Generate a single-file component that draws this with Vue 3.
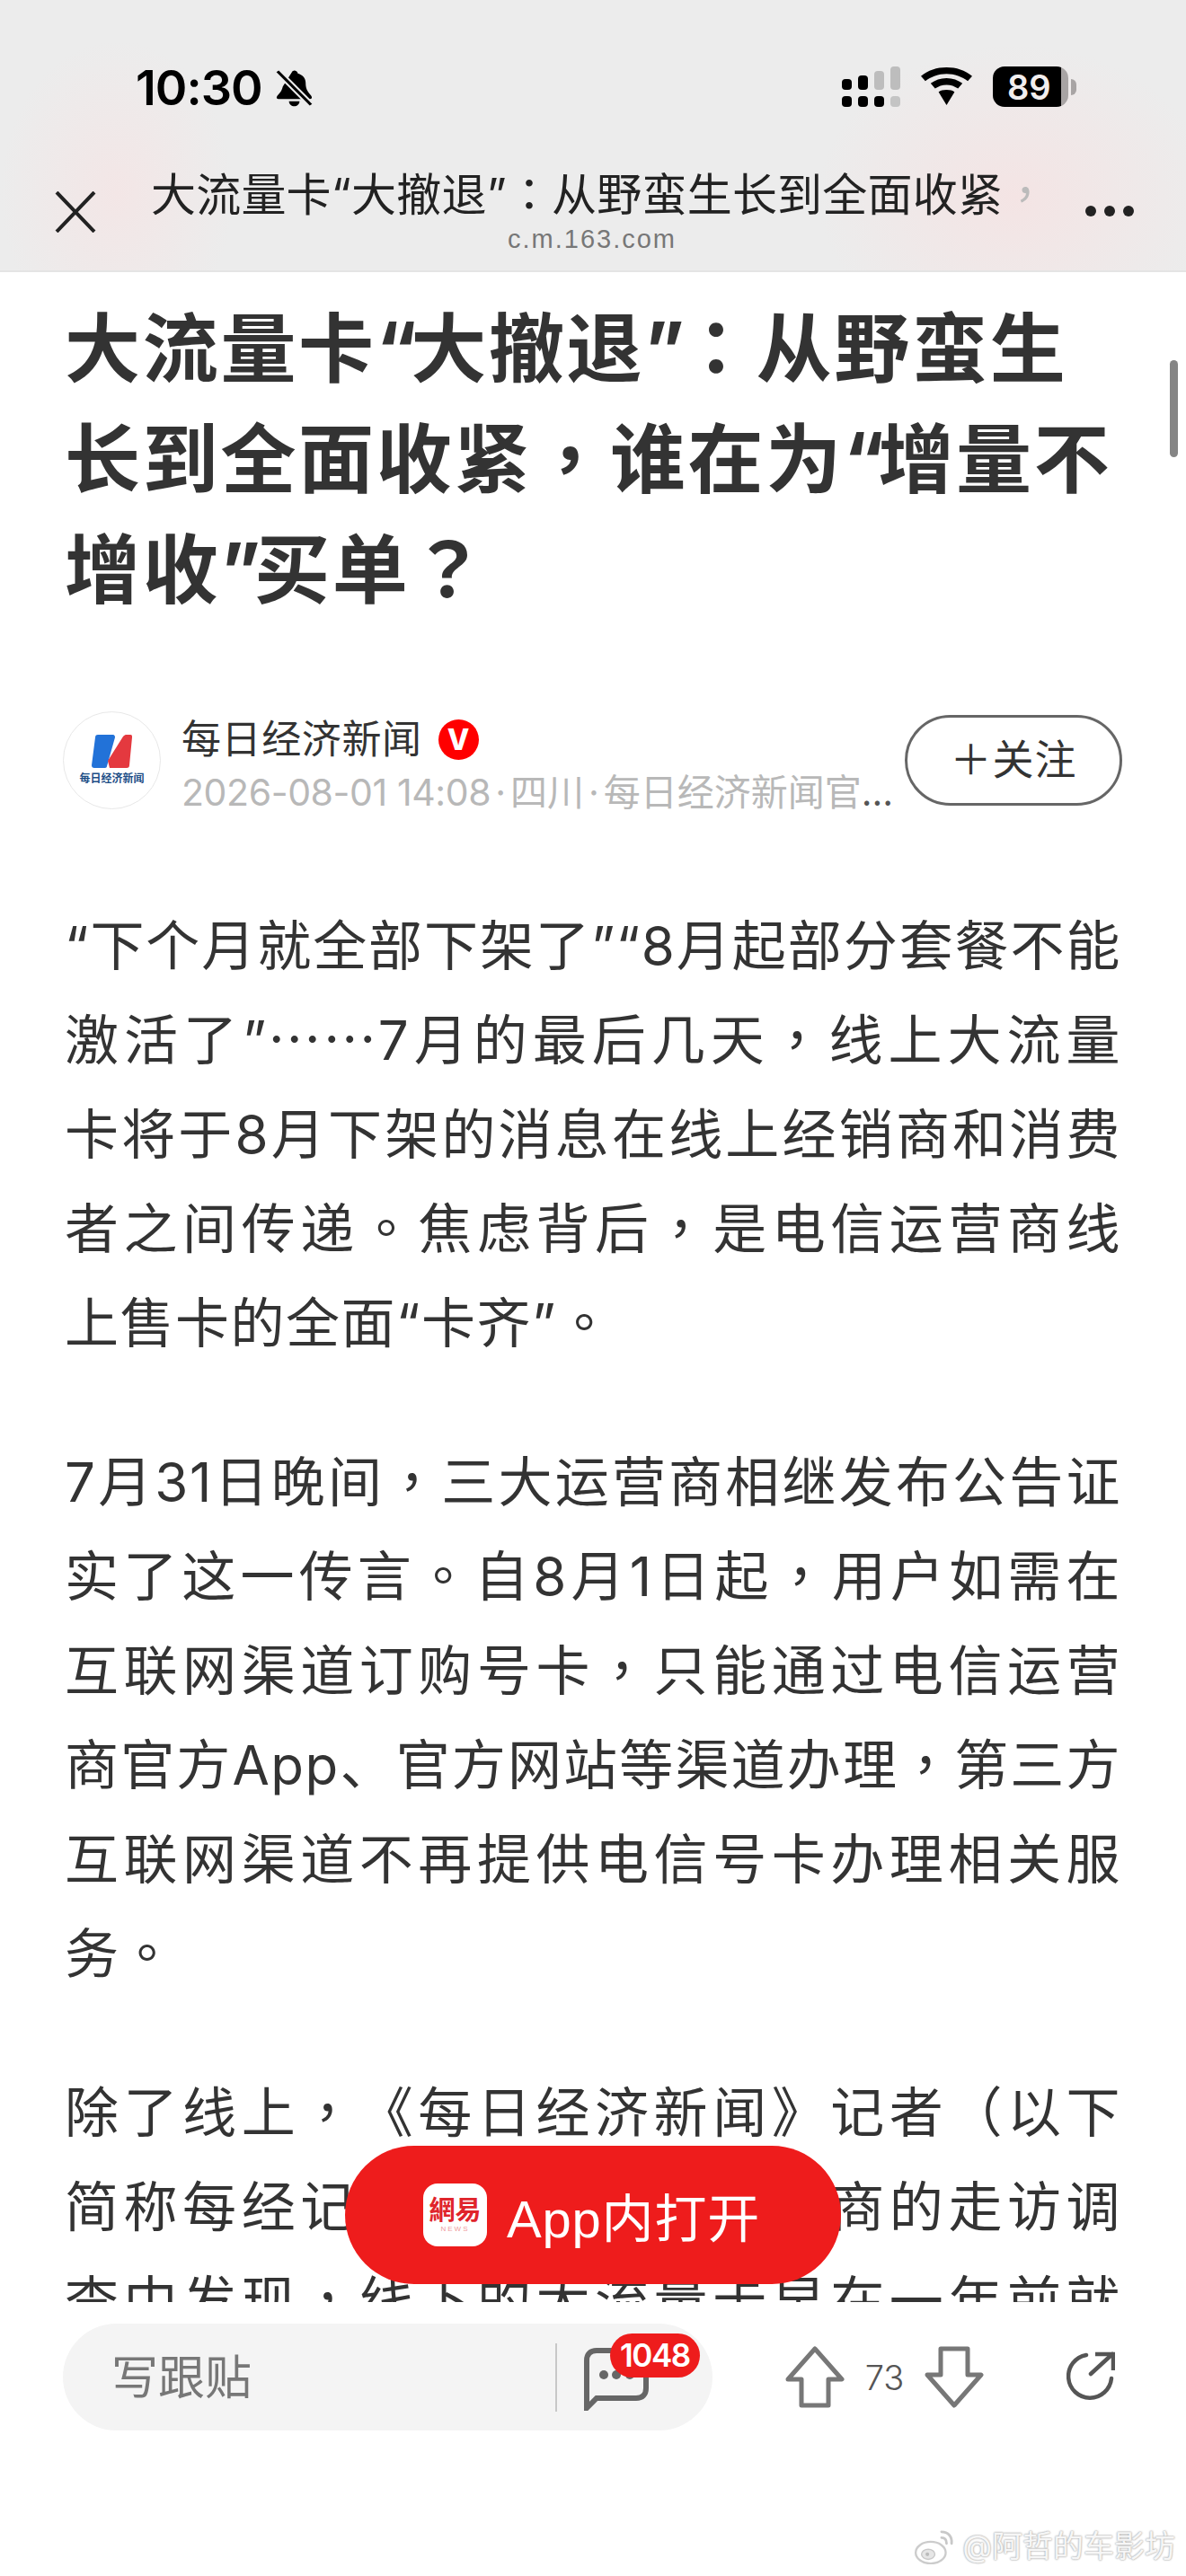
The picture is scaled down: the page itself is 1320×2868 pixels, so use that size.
<template>
  <div class="page">
    <header class="top">
      <div class="status">
        <div class="status-left">
          <span class="time">10:30</span>
          <svg class="bell" viewBox="0 0 44 54" width="43" height="44" preserveAspectRatio="none">
            <path d="M22 3c2 0 4 2 4 4 6 2 9 7 9 13 0 6 1 11 6 17 2 3 1 5-2 5H5c-3 0-4-2-2-5 4-4 5-8 6-12L20 4z" fill="#000"/>
            <path d="M16 45h12c0 4-3 7-6 7s-6-3-6-7z" fill="#000"/>
            <path d="M3 4l38 46" stroke="#ececec" stroke-width="8"/>
            <path d="M3 4l38 46" stroke="#000" stroke-width="3.4"/>
          </svg>
        </div>
        <div class="status-right">
          <svg viewBox="0 0 65 45" width="65" height="45">
            <rect x="0" y="14" width="11" height="12" rx="4" fill="#000"/>
            <rect x="18" y="10" width="11" height="16" rx="4" fill="#000"/>
            <rect x="36" y="5" width="11" height="21" rx="4" fill="#bdbdbd"/>
            <rect x="54" y="0" width="11" height="26" rx="4" fill="#bdbdbd"/>
            <rect x="0" y="33" width="11" height="12" rx="4" fill="#000"/>
            <rect x="18" y="33" width="11" height="12" rx="4" fill="#000"/>
            <rect x="36" y="33" width="11" height="12" rx="4" fill="#000"/>
            <rect x="54" y="33" width="11" height="12" rx="4" fill="#c4c4c4"/>
          </svg>
          <svg class="wifi" viewBox="0 0 58 52" width="57" height="42" preserveAspectRatio="none">
            <path d="M29 0c11 0 21 4 29 12l-5 7C47 13 38 9 29 9S11 13 5 19l-5-7C8 4 18 0 29 0z" fill="#000"/>
            <path d="M29 15c7 0 13 3 18 7l-5 7c-4-3-8-5-13-5s-9 2-13 5l-5-7c5-4 11-7 18-7z" fill="#000"/>
            <path d="M29 31c4 0 7 1 9 3L29 52 20 34c2-2 5-3 9-3z" fill="#000"/>
          </svg>
          <div class="battery">
            <div class="battery-body"><span>89</span></div>
            <div class="battery-nub"></div>
          </div>
        </div>
      </div>
      <div class="nav">
        <svg class="close" viewBox="0 0 46 46" width="46" height="46">
          <path d="M2 1l42 44M44 1L2 45" stroke="#222" stroke-width="4" fill="none"/>
        </svg>
        <div class="nav-text">
          <div class="nav-title">
            <span v-for="(part, i) in parts('大流量卡“大撤退”：从野蛮生长到全面收紧')" :key="i" :class="part.kind">{{ part.text }}</span><span class="punct fade">，</span>
          </div>
          <div class="nav-url">c.m.163.com</div>
        </div>
        <div class="more"><i></i><i></i><i></i></div>
      </div>
    </header>

    <main class="article">
      <h1><span v-for="(part, i) in parts(title)" :key="i" :class="part.kind">{{ part.text }}</span></h1>
      <div class="author">
        <div class="avatar">
          <svg viewBox="0 0 45 37" width="45" height="37">
            <path d="M7 0h16c3 0 3 2 3 3L17 35c0 1-1 2-2 2H3c-2 0-3-1-3-3L4 3c0-2 1-3 3-3z" fill="#2272d8"/>
            <path d="M38 0h5c2 0 2 1 2 3l-3 31c0 2-1 3-3 3H20l-2-8L35 2c1-1 2-2 3-2z" fill="#e4393f"/>
          </svg>
          <span>每日经济新闻</span>
        </div>
        <div class="author-info">
          <div class="author-name">每日经济新闻<b class="vip">V</b></div>
          <div class="author-meta">
            <span class="stamp">2026-08-01 14:08</span><span class="sep">·</span>四川<span class="sep">·</span>每日经济新闻官<span class="dots">...</span>
          </div>
        </div>
        <div class="follow">＋关注</div>
      </div>
      <div class="body">
        <p v-for="(para, i) in paragraphs" :key="i">
          <span
            v-for="(line, j) in para"
            :key="j"
            class="line"
            :class="{ last: line.length < 12 }"
          ><span v-for="(part, k) in parts(line)" :key="k" :class="part.kind">{{ part.text }}</span></span>
        </p>
      </div>
    </main>

    <div class="open-app">
      <div class="app-logo">
        <span class="logo-cn">網易</span>
        <span class="logo-en">NEWS</span>
      </div>
      <span class="open-text">App内打开</span>
    </div>

    <footer class="bottom">
      <div class="reply">
        <span class="reply-hint">写跟贴</span>
        <div class="reply-comments">
          <svg viewBox="0 0 72 70" width="72" height="70">
            <path d="M3 67V14C3 7 7 3 14 3h44c7 0 11 4 11 11v31c0 7-4 11-11 11H14z" fill="none" stroke="#666" stroke-width="6"/>
            <circle cx="22" cy="30" r="5" fill="#666"/>
            <circle cx="36" cy="30" r="5" fill="#666"/>
            <circle cx="51" cy="30" r="5" fill="#666"/>
          </svg>
          <span class="count">1048</span>
        </div>
      </div>
      <div class="votes">
        <svg viewBox="0 0 66 69" width="66" height="69">
          <path d="M33 3L63 37H48V66H18V37H3z" fill="none" stroke="#777" stroke-width="5" stroke-linejoin="round"/>
        </svg>
        <span class="vote-num">73</span>
        <svg viewBox="0 0 66 69" width="66" height="69">
          <path d="M33 66L63 32H48V3H18V32H3z" fill="none" stroke="#777" stroke-width="5" stroke-linejoin="round"/>
        </svg>
      </div>
      <svg class="share" viewBox="0 0 54 54" width="54" height="54">
        <path d="M22 4A24 24 0 1 0 50 30" fill="none" stroke="#555" stroke-width="4.5" stroke-linecap="round"/>
        <path d="M27 25L51 3" fill="none" stroke="#555" stroke-width="4.5" stroke-linecap="round"/>
        <path d="M32 3h20v18" fill="none" stroke="#555" stroke-width="4.5"/>
      </svg>
    </footer>

    <div class="watermark">
      <svg viewBox="0 0 50 42" width="47" height="39">
        <ellipse cx="20" cy="28" rx="18" ry="13" fill="#fff" stroke="#ccc" stroke-width="2.5"/>
        <ellipse cx="17" cy="30" rx="8" ry="6" fill="#e6e6e6" stroke="#c8c8c8" stroke-width="1.5"/>
        <circle cx="16" cy="30" r="2.2" fill="#bbb"/>
        <path d="M33 3c8 0 13 6 12 14M33 10c4 0 6 3 6 7" fill="none" stroke="#c8c8c8" stroke-width="3" stroke-linecap="round"/>
      </svg>
      <span>@阿哲的车影坊</span>
    </div>

    <div class="scrollbar"></div>
  </div>
</template>

<script setup>
const title = "大流量卡“大撤退”：从野蛮生长到全面收紧，谁在为“增量不增收”买单？";

const paragraphs = [
  [
    "“下个月就全部下架了”“8月起部分套餐不能",
    "激活了”……7月的最后几天，线上大流量",
    "卡将于8月下架的消息在线上经销商和消费",
    "者之间传递。焦虑背后，是电信运营商线",
    "上售卡的全面“卡齐”。",
  ],
  [
    "7月31日晚间，三大运营商相继发布公告证",
    "实了这一传言。自8月1日起，用户如需在",
    "互联网渠道订购号卡，只能通过电信运营",
    "商官方App、官方网站等渠道办理，第三方",
    "互联网渠道不再提供电信号卡办理相关服",
    "务。",
  ],
  [
    "除了线上，《每日经济新闻》记者（以下",
    "简称每经记者）在对线下运营商的走访调",
    "查中发现，线下的大流量卡早在一年前就",
  ],
];

// the centred punctuation of the original comes from the TC cut of the font
function parts(text) {
  return text
    .split(/(……|[，。：？“”])/)
    .filter(Boolean)
    .map((t) => {
      let kind = "";
      if (/^[“”]$/.test(t)) kind = "quote";
      else if (/^(……|[，。：？])$/.test(t)) kind = "punct";
      return { text: t, kind };
    });
}
</script>

<style scoped>
.page {
  position: relative;
  width: 1320px;
  height: 2868px;
  overflow: hidden;
  background: #fff;
  display: flex;
  flex-direction: column;
  font-family: "Inter", "Noto Sans CJK SC", sans-serif;
  color: #333;
}
.punct {
  font-family: "Noto Sans CJK TC", sans-serif;
  line-height: 0;
}
.top {
  flex: none;
  height: 303px;
  box-sizing: border-box;
  border-bottom: 2px solid #e4e4e4;
  background:
    radial-gradient(ellipse 130px 170px at 130px 215px, #f3e6e6, rgba(243, 230, 230, 0)),
    radial-gradient(ellipse 220px 170px at 1130px 220px, #f4e4e4, rgba(244, 228, 228, 0)),
    #ececec;
}
.status {
  height: 124px;
  box-sizing: border-box;
  padding: 73px 122px 0 151px;
  display: flex;
  justify-content: space-between;
}
.status-left {
  display: flex;
  align-items: flex-start;
  gap: 14px;
}
.time {
  font-size: 54px;
  line-height: 50px;
  font-weight: 600;
  color: #000;
  letter-spacing: -1px;
}
.bell {
  margin-top: 3px;
}
.status-right {
  display: flex;
  align-items: flex-start;
  gap: 23px;
  margin-top: 1px;
}
.wifi {
  margin-top: 1px;
}
.battery {
  display: flex;
  align-items: center;
  height: 45px;
}
.battery-body {
  width: 84px;
  height: 45px;
  border-radius: 13px;
  background: linear-gradient(90deg, #000 90.5%, #a8a4a4 90.5%);
  display: flex;
  align-items: center;
  padding-left: 16px;
  box-sizing: border-box;
}
.battery-body span {
  font-size: 38px;
  font-weight: 600;
  color: #f2eeee;
  line-height: 1;
}
.battery-nub {
  width: 6px;
  height: 18px;
  margin-left: 3px;
  border-radius: 0 9px 9px 0;
  background: #a8a4a4;
}
.nav {
  display: flex;
  align-items: flex-start;
  padding: 65px 58px 0 61px;
}
.close {
  flex: none;
  margin-top: 24px;
}
.nav-text {
  flex: 1;
  min-width: 0;
  margin-left: 61px;
}
.nav-title {
  font-size: 50px;
  line-height: 56px;
  letter-spacing: 0.2px;
  color: #222;
  white-space: nowrap;
}
.fade {
  color: #bbb;
}
.nav-url {
  font-family: "Liberation Sans", sans-serif;
  font-size: 29px;
  line-height: 32px;
  margin-top: 5px;
  margin-left: 397px;
  color: #777;
  letter-spacing: 2px;
}
.more {
  flex: none;
  display: flex;
  gap: 9px;
  margin-top: 40px;
}
.more i {
  width: 12px;
  height: 12px;
  border-radius: 50%;
  background: #222;
}
.article {
  flex: 1;
  min-height: 0;
  overflow: hidden;
  padding: 24px 72px 0;
}
h1 {
  margin: 0;
  font-size: 84px;
  line-height: 123px;
  font-weight: 700;
  color: #333;
  letter-spacing: 2.7px;
}
h1 .quote {
  letter-spacing: -7px;
}
.author {
  display: flex;
  align-items: center;
  margin-top: 95px;
  margin-left: -2px;
  margin-right: -1px;
  height: 110px;
}
.avatar {
  flex: none;
  width: 109px;
  height: 109px;
  box-sizing: border-box;
  border: 1px solid #e8e8e8;
  border-radius: 50%;
  display: flex;
  flex-direction: column;
  align-items: center;
  justify-content: center;
  gap: 5px;
}
.avatar span {
  font-size: 12px;
  line-height: 14px;
  font-weight: 700;
  color: #1d4e86;
  white-space: nowrap;
}
.author-info {
  flex: 1;
  min-width: 0;
  margin-left: 23px;
  padding-top: 8px;
}
.author-name {
  font-size: 44px;
  line-height: 60px;
  letter-spacing: 0.6px;
  color: #333;
  display: flex;
  align-items: center;
}
.vip {
  width: 45px;
  height: 45px;
  margin-left: 18px;
  border-radius: 50%;
  background: #f00;
  color: #fff;
  font-size: 32px;
  line-height: 45px;
  font-weight: 800;
  text-align: center;
  letter-spacing: 0;
}
.author-meta {
  font-size: 41px;
  line-height: 50px;
  margin-top: 4px;
  color: #b8b8b8;
  white-space: nowrap;
}
.stamp {
  letter-spacing: -0.4px;
}
.sep {
  padding: 0 5px;
}
.dots {
  color: #555;
}
.follow {
  flex: none;
  width: 242px;
  height: 101px;
  margin-left: 16px;
  box-sizing: border-box;
  border: 3px solid #666;
  border-radius: 51px;
  font-size: 46px;
  line-height: 93px;
  letter-spacing: 1px;
  text-align: center;
  color: #333;
}
.body {
  margin-top: 100px;
}
p {
  margin: 0 0 72px;
  font-size: 60px;
  line-height: 105px;
  letter-spacing: 1.5px;
  color: #333;
  text-spacing-trim: space-all;
}
.line {
  display: block;
  white-space: nowrap;
  text-align: justify;
  text-align-last: justify;
}
.line.last {
  text-align-last: left;
}
.open-app {
  position: absolute;
  left: 384px;
  top: 2389px;
  width: 552px;
  height: 154px;
  box-sizing: border-box;
  padding-left: 87px;
  border-radius: 77px;
  background: #ee1c1c;
  color: #fff;
  font-family: "Liberation Sans", "Noto Sans CJK SC", sans-serif;
  font-size: 58px;
  display: flex;
  align-items: center;
  gap: 22px;
}
.open-text {
  letter-spacing: 0.8px;
}
.app-logo {
  width: 71px;
  height: 70px;
  border-radius: 16px;
  background: #fff;
  display: flex;
  flex-direction: column;
  align-items: center;
  justify-content: center;
  color: #e0242b;
}
.logo-cn {
  font-size: 29px;
  line-height: 32px;
  font-weight: 700;
  white-space: nowrap;
}
.logo-en {
  font-size: 8px;
  line-height: 10px;
  letter-spacing: 2px;
  color: #ee9a9a;
}
.bottom {
  flex: none;
  height: 305px;
  box-sizing: border-box;
  background: #fff;
  padding: 24px 0 0 70px;
  display: flex;
  align-items: flex-start;
}
.reply {
  flex: none;
  width: 723px;
  height: 119px;
  border-radius: 60px;
  background: #f4f4f4;
  display: flex;
  align-items: center;
  justify-content: space-between;
}
.reply-hint {
  margin-left: 54px;
  margin-top: -6px;
  font-size: 52px;
  color: #777;
}
.reply-comments {
  position: relative;
  width: 175px;
  height: 76px;
  border-left: 2px solid #c8c8c8;
  box-sizing: border-box;
  padding: 5px 0 0 30px;
}
.count {
  position: absolute;
  left: 59px;
  top: -11px;
  height: 49px;
  padding: 0 11px;
  border-radius: 25px;
  background: #ee1c1c;
  color: #fff;
  font-size: 35px;
  font-weight: 600;
  line-height: 49px;
  letter-spacing: -1.5px;
}
.votes {
  display: flex;
  align-items: center;
  margin-left: 81px;
  margin-top: 25px;
}
.vote-num {
  width: 89px;
  text-align: center;
  font-size: 38px;
  color: #555;
  font-weight: 300;
}
.share {
  margin-left: 92px;
  margin-top: 31px;
}
.watermark {
  position: absolute;
  right: 12px;
  top: 2813px;
  display: flex;
  align-items: center;
  gap: 7px;
  font-size: 34px;
  line-height: 44px;
  color: #f6f6f6;
  text-shadow: 0 0 2px #aaa, 0 0 2px #aaa;
}
.scrollbar {
  position: absolute;
  left: 1302px;
  top: 401px;
  width: 9px;
  height: 108px;
  border-radius: 5px;
  background: #858585;
}
</style>

<style>
html,
body {
  margin: 0;
  background: #fff;
}
</style>
